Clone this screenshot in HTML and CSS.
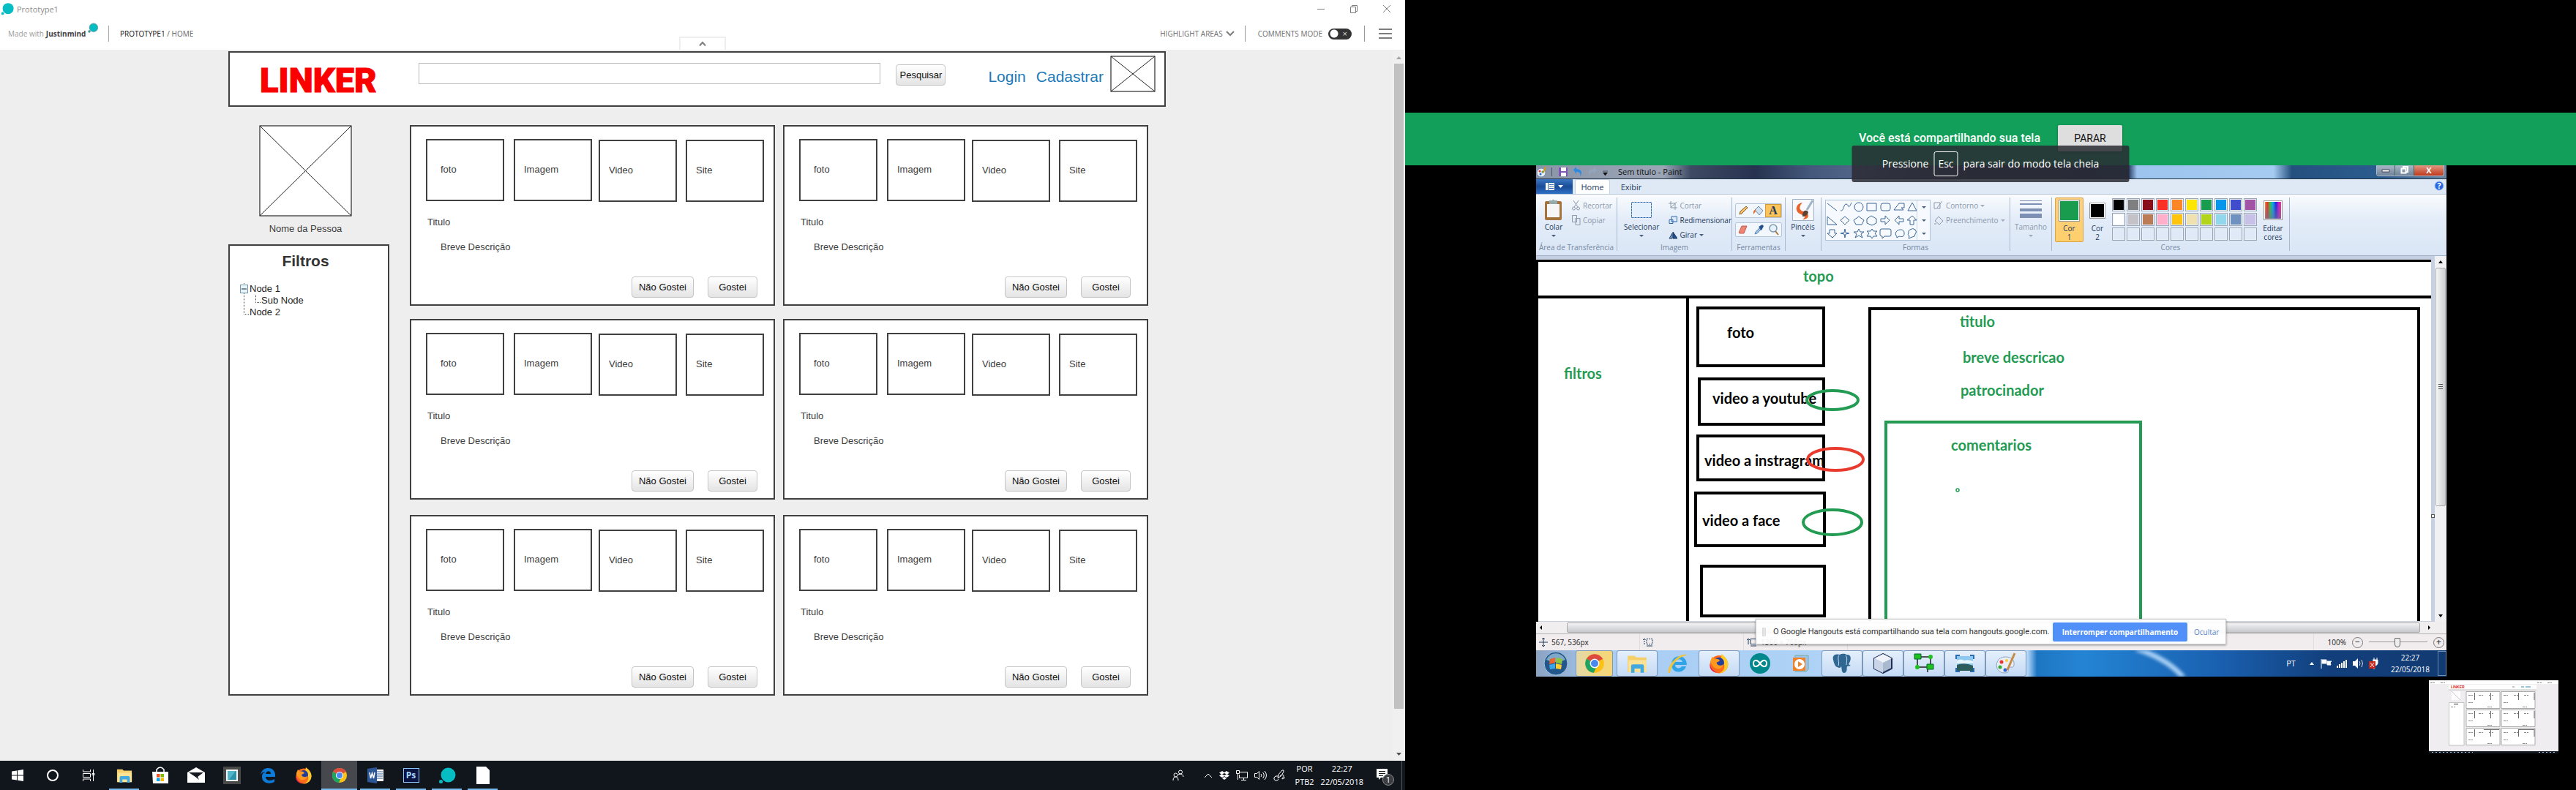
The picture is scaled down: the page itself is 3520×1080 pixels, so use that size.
FILE: index.html
```html
<!DOCTYPE html>
<html lang="pt-BR">
<head>
<meta charset="utf-8">
<title>Prototype1</title>
<link rel="stylesheet" href="styles.css">
</head>
<body>
<svg class="defs" aria-hidden="true">
  <defs>
    <symbol id="chrome" viewBox="0 0 24 24"><circle cx="12" cy="12" r="11" fill="#fbc116"/><path d="M12 12 2.500 6.500A11 11 0 0 1 21.500 6.500Z" fill="#dd4b3e"/><path d="M2.500 6.500A11 11 0 0 0 11 23L15 14Z" fill="#1da362"/><path d="M12 7h9.800L21.500 6.500 12 4Z" fill="#dd4b3e"/><circle cx="12" cy="12" r="5.500" fill="#fff"/><circle cx="12" cy="12" r="4.300" fill="#4a87ee"/></symbol>
    <symbol id="firefox" viewBox="0 0 24 24"><circle cx="12" cy="13" r="10.500" fill="#ff6a1c"/><path d="M15 1c4 3 8 7 7.500 13A10.500 10.500 0 0 1 12 23.500c5-2 7-6 6-10-1-4-5-6-3-12.500Z" fill="#ffc928"/><circle cx="12" cy="11" r="6" fill="#233f9b"/><path d="M2 9 4 4l3 3c3-1 5 0 6 2l-4 2c1 4 5 4 8 2-1 6-9 7-12 2C3 13 2 11 2 9Z" fill="#ff9a1f"/><path d="M1.500 12c1 6 4 9 9 11C4 23 0 18 1.500 12Z" fill="#e22a4c"/></symbol>
    <symbol id="blob" viewBox="0 0 24 24"><circle cx="13.500" cy="11.500" r="10" fill="#07bdc4"/><circle cx="3.500" cy="20.500" r="2.500" fill="#07bdc4"/></symbol>
    <symbol id="folder" viewBox="0 0 24 24"><path d="M1 3h8l2 2h12v17H1Z" fill="#f5cf6a"/><path d="M2 8h21v14H2Z" fill="#fbe296"/><path d="M5 23v-8q0-2 2-2h11q2 0 2 2v8h-4v-5H9v5Z" fill="#41a9e0"/></symbol>
  </defs>
</svg>
<div class="desktop">

<section class="screen-left">
  <div class="app-title">
    <svg class="i16"><use href="#blob"/></svg><span>Prototype1</span>
    <div class="win-buttons">
      <button aria-label="Minimizar"><svg width="12" height="12"><path d="M1 6.500h10"/></svg></button>
      <button aria-label="Restaurar"><svg width="12" height="12"><path d="M1.500 3.500h7v8h-7ZM3.500 3.500v-2h7v8h-2"/></svg></button>
      <button aria-label="Fechar"><svg width="12" height="12"><path d="M1 1l10 10M11 1 1 11"/></svg></button>
    </div>
  </div>
  <header class="app-bar">
    <a class="made" href="#">Made with <b>Justinmind</b><svg class="i14"><use href="#blob"/></svg></a>
    <nav class="crumbs"><a href="#">PROTOTYPE1</a> / HOME</nav>
    <button class="collapse" aria-label="Recolher"><svg width="12" height="8"><path d="M2 6.500 6 2l4 4.500"/></svg></button>
    <div class="app-tools">
      <button class="highlight">HIGHLIGHT AREAS <svg width="12" height="8"><path d="M1 1l5 5 5-5"/></svg></button>
      <label class="comments">COMMENTS MODE <input type="checkbox" class="toggle"></label>
      <button class="burger" aria-label="Menu"><svg width="18" height="14"><path d="M0 1h18M0 7h18M0 13h18"/></svg></button>
    </div>
  </header>
  <div class="viewport">
    <div class="proto">
      <div class="page">
        <header class="top">
          <h1 class="logo">LINKER</h1>
          <input class="search" type="search" aria-label="Pesquisar">
          <button class="btn find">Pesquisar</button>
          <nav class="links"><a href="#">Login</a><a href="#">Cadastrar</a></nav>
          <svg class="ph ph-small" viewBox="0 0 62 50"><rect x="1" y="1" width="60" height="48"/><path d="M1 1 61 49M61 1 1 49"/></svg>
        </header>
        <div class="columns">
          <aside class="side">
            <svg class="ph ph-big" viewBox="0 0 127 125"><rect x="1" y="1" width="125" height="123"/><path d="M1 1 126 124M126 1 1 124"/></svg>
            <p class="name">Nome da Pessoa</p>
            <div class="filters">
              <h2>Filtros</h2>
              <ul class="tree">
                <li><svg width="13" height="16"><path class="dots" d="M5.500 0v16"/><rect x="0.500" y="2.500" width="10" height="11"/><path class="minus" d="M2 8h7"/></svg>Node 1</li>
                <li><svg width="29" height="16"><path class="dots" d="M5.500 0v16M21.500 0v10.500h7"/></svg>Sub Node</li>
                <li><svg width="13" height="16"><path class="dots" d="M5.500 0v10.500h7"/></svg>Node 2</li>
              </ul>
            </div>
          </aside>
          <main class="cards">
            <article class="card"><div class="media"><div>foto</div><div>Imagem</div><div>Video</div><div>Site</div></div><h3>Titulo</h3><p>Breve Descrição</p><div class="acts"><button class="btn">Não Gostei</button><button class="btn">Gostei</button></div></article>
            <article class="card"><div class="media"><div>foto</div><div>Imagem</div><div>Video</div><div>Site</div></div><h3>Titulo</h3><p>Breve Descrição</p><div class="acts"><button class="btn">Não Gostei</button><button class="btn">Gostei</button></div></article>
            <article class="card"><div class="media"><div>foto</div><div>Imagem</div><div>Video</div><div>Site</div></div><h3>Titulo</h3><p>Breve Descrição</p><div class="acts"><button class="btn">Não Gostei</button><button class="btn">Gostei</button></div></article>
            <article class="card"><div class="media"><div>foto</div><div>Imagem</div><div>Video</div><div>Site</div></div><h3>Titulo</h3><p>Breve Descrição</p><div class="acts"><button class="btn">Não Gostei</button><button class="btn">Gostei</button></div></article>
            <article class="card"><div class="media"><div>foto</div><div>Imagem</div><div>Video</div><div>Site</div></div><h3>Titulo</h3><p>Breve Descrição</p><div class="acts"><button class="btn">Não Gostei</button><button class="btn">Gostei</button></div></article>
            <article class="card"><div class="media"><div>foto</div><div>Imagem</div><div>Video</div><div>Site</div></div><h3>Titulo</h3><p>Breve Descrição</p><div class="acts"><button class="btn">Não Gostei</button><button class="btn">Gostei</button></div></article>
          </main>
        </div>
      </div>
    </div>
    <div class="scroll">
      <svg width="17" height="19"><path d="M5 13h7L8.500 9Z" fill="#a3a3a3"/></svg>
      <div class="thumb"></div>
      <svg width="17" height="17"><path d="M5 6h7l-3.500 4Z" fill="#505050"/></svg>
    </div>
  </div>
  <footer class="taskbar">
    <button aria-label="Iniciar"><svg class="i18" viewBox="0 0 18 18"><path fill="#fff" d="M1 3.500 8 2.500v6H1ZM9 2.300 17 1v7.500H9ZM1 9.500h7v6L1 14.500ZM9 9.500h8V17l-8-1.300Z"/></svg></button>
    <button aria-label="Cortana"><svg class="i18" viewBox="0 0 18 18"><circle cx="9" cy="9" r="7" fill="none" stroke="#fff" stroke-width="2"/></svg></button>
    <button aria-label="Tarefas"><svg class="i18" viewBox="0 0 18 18"><path fill="none" stroke="#fff" d="M1.500 1v3h10V1M1.500 17v-3h10v3M1.500 6.500h10v5h-10ZM15.500 1v16M14 6.500h3v2h-3Z"/></svg></button>
    <button class="open" aria-label="Explorador"><svg class="i22"><use href="#folder"/></svg></button>
    <button aria-label="Loja"><svg class="i24" viewBox="0 0 24 24"><path d="M1 7h22v16H2Z" fill="#fff"/><path d="M7 7V4q5-6 10 0v3" fill="none" stroke="#fff" stroke-width="1.500"/><path d="M7 10h4.500v4.500H7Z" fill="#f25022"/><path d="M12.500 10H17v4.500h-4.500Z" fill="#7fba00"/><path d="M7 15.500h4.500V20H7Z" fill="#00a4ef"/><path d="M12.500 15.500H17V20h-4.500Z" fill="#ffb900"/></svg></button>
    <button aria-label="Email"><svg class="i24" viewBox="0 0 24 24"><path d="M0 8 12 1l12 7v14H0Z" fill="#fff"/><path d="M2 8h20l-8 6 2 4-5-4Z" fill="#14181f"/></svg></button>
    <button aria-label="Notas"><svg class="i24" viewBox="0 0 24 24"><path d="M0 0h24v24H0Z" fill="#494949"/><path d="M4 4h16v16H4Z" fill="#f5f5f5"/><path d="M6 6h12v12H6Z" fill="#52b5c9"/><path d="m8 18 9-12h1v12Z" fill="#2c91aa"/></svg></button>
    <button aria-label="Edge"><svg class="i22" viewBox="0 0 22 22"><path d="M1 10C3 3 7 1 11.500 1 18 1 21 6 21 10v3H8c0 6 8 6 12 3v4c-8 4-17 1-17-7 0-4 2-6 5-7-4 0-6 2-7 4Zm7-1h7c0-5-6-5-7 0Z" fill="#0e7bd8"/></svg></button>
    <button aria-label="Firefox"><svg class="i24"><use href="#firefox"/></svg></button>
    <button class="open active" aria-label="Chrome"><svg class="i22"><use href="#chrome"/></svg></button>
    <button class="open" aria-label="Word"><svg class="i22" viewBox="0 0 22 22"><path d="M12 3h10v16H12Z" fill="#fff"/><path d="M13 6h8M13 9h8M13 12h8M13 15h8" stroke="#2b5797"/><path d="M0 2 13 0v22L0 20Z" fill="#2b5797"/><path d="m3 7 1.500 8L6.500 8l2 7L10 7" fill="none" stroke="#fff" stroke-width="1.500"/></svg></button>
    <button class="open" aria-label="Photoshop"><span class="ps">Ps</span></button>
    <button class="open" aria-label="Justinmind"><svg class="i24"><use href="#blob"/></svg></button>
    <button class="open" aria-label="Documento"><svg class="i24" viewBox="0 0 24 24"><path d="M3 0h13l5 5v19H3Z" fill="#fff"/></svg></button>
    <div class="tray">
      <svg width="16" height="16" viewBox="0 0 16 16"><circle cx="11" cy="3.500" r="2.500"/><circle cx="4.500" cy="7.500" r="2.500"/><path d="M1 15q0-5 3.500-5T8 15M8 7q3-2 5.500 0 1.500 1 1.500 3"/></svg>
      <svg class="up" width="12" height="8" viewBox="0 0 12 8"><path d="m1 7 5-5 5 5"/></svg>
      <svg width="14" height="14" viewBox="0 0 14 14"><path class="fill" d="m0 3.500 4-2.500 3 2 3-2 4 2.500-3 2 3 2L10 10 7 8l-3 2-4-2.500 3-2ZM4 11l3-2 3 2-3 2Z"/><path d="m4 5.500 3-1.500 3 1.500L7 7Z" style="fill:#11151c;stroke:none"/></svg>
      <svg width="16" height="14" viewBox="0 0 16 14"><path d="M4 2.500h11.500v8H4.500V6M7 13.500h7M10.500 10v3M.5.500h4v4h-4ZM2.500 5v8"/></svg>
      <svg width="17" height="14" viewBox="0 0 17 14"><path d="M.5 4.500h3l3-3v11l-3-3h-3ZM9 5q2 2 0 4M11.500 3q3.500 4 0 8M14 1q5 6 0 12"/></svg>
      <svg width="17" height="16" viewBox="0 0 17 16"><path d="M7 9Q2 8 1 11t2 4 4-2M6 12q0-6 6-11 3-1 2 2-2 6-8 9ZM9 9q4-3 5-1t-2 4q-1 2 4-1"/></svg>
      <p class="lang">POR<br>PTB2</p>
      <p class="clock">22:27<br>22/05/2018</p>
      <svg class="note" width="26" height="26" viewBox="0 0 26 26"><path class="fill" d="M1 2h15v12H7l-3 3v-3H1Z"/><path d="M4 5.500h9M4 8.500h9M4 11.500h6" style="stroke:#11151c"/><circle cx="17" cy="17" r="7.500" style="fill:#3a3d42;stroke:#8a8a8a"/><text x="17" y="21">1</text></svg>
    </div>
  </footer>
</section>

<section class="screen-right">
  <div class="share-bar">
    <span>Você está compartilhando sua tela</span><button>PARAR</button>
    <div class="toast">Pressione <kbd>Esc</kbd> para sair do modo tela cheia</div>
  </div>
  <div class="remote">
    <div class="p-title">
      <svg width="104" height="18" viewBox="0 0 104 18"><circle cx="7" cy="10" r="6" fill="#e8eef6" stroke="#6d8cb2"/><circle cx="5" cy="8" r="1.500" fill="#d33"/><circle cx="9" cy="9" r="1.500" fill="#3a6"/><circle cx="6" cy="12" r="1.500" fill="#36c"/><path d="m10 10 3-8" stroke="#d90" stroke-width="2"/><path d="M21.500 3v12" stroke="#456"/><path d="M31 3h12v12H31Z" fill="#7c55b5"/><path d="M34 3h7v5h-7ZM34 10h7v5h-7Z" fill="#fff"/><path d="m51 6 4-4v3c7 0 9 5 5 10 1-4 0-6-5-6v3Z" fill="#2f8be0"/><path d="m83 6-4-4v3c-7 0-9 5-5 10-1-4 0-6 5-6v3Z" fill="#93a5bd"/><path d="M91 8h7M91.500 10h6l-3 4Z" fill="#111" stroke="#111" stroke-width=".5"/></svg>
      <span>Sem título - Paint</span>
      <div class="aero"><button aria-label="Minimizar"><svg width="12" height="8"><path d="M1 3h10v3H1Z" fill="#fff" stroke="#445"/></svg></button><button aria-label="Restaurar"><svg width="12" height="12"><path d="M1.500 3.500h6v6h-6ZM4 3V1h6v7H8" fill="none" stroke="#fff" stroke-width="2"/></svg></button><button class="close" aria-label="Fechar">X</button></div>
    </div>
    <div class="p-tabs">
      <button class="file" aria-label="Arquivo"><svg width="26" height="12"><path d="M1 1h12v10H1Z" fill="#fff"/><path d="M4.500 1v10M6 3.500h6M6 6h6M6 8.500h6" stroke="#2a62ae"/><path d="M18 4h7l-3.500 4Z" fill="#fff"/></svg></button>
      <button class="tab on">Home</button><button class="tab">Exibir</button>
      <svg class="help" width="14" height="14"><circle cx="7" cy="7" r="6" fill="#2a6ae0" stroke="#9fc0f2"/><text x="7" y="11">?</text></svg>
    </div>
    <div class="ribbon">
      <div class="grp g-clip"><div class="body">
        <button class="big"><svg width="26" height="30" viewBox="0 0 26 30"><rect x="1" y="3" width="23" height="26" rx="2" fill="#a5733c"/><path d="M4 7h17v18H4Z" fill="#f6f6f6"/><path d="M7 2h4q1.500-3 3 0h4v5H7Z" fill="#9aa"/></svg>Colar<i></i></button>
        <div class="stack dim"><button><svg width="12" height="14" viewBox="0 0 12 14"><path d="m2 0 6 9M9 0 3 9"/><circle cx="2.500" cy="11" r="2"/><circle cx="8.500" cy="11" r="2"/></svg>Recortar</button><button><svg width="12" height="14" viewBox="0 0 12 14"><path d="M.5.500h6v9h-6ZM5 4.500h6v9H5Z"/></svg>Copiar</button></div>
      </div><h4>Área de Transferência</h4></div>
      <div class="grp g-img"><div class="body">
        <button class="big"><svg width="30" height="30"><rect x="1.500" y="4.500" width="27" height="21" fill="#e4f0fc" stroke="#2f68a8" stroke-dasharray="3 1"/></svg>Selecionar<i></i></button>
        <div class="stack"><button class="dim"><svg width="12" height="12" viewBox="0 0 12 12"><path d="M3 0v9h9M0 3h9v9M3 9l8-8"/></svg>Cortar</button><button><svg width="12" height="12" viewBox="0 0 12 12"><path d="M4 1h7.500v7H4ZM1 5.500h5v5H1Z" fill="#dceafb" stroke="#2f68a8"/></svg>Redimensionar</button><button><svg width="12" height="12" viewBox="0 0 12 12"><path d="m6 2 6 9H6Z" fill="#1d4f93"/><path d="M5 4v7H1Z" fill="#8db8e6"/></svg>Girar<i></i></button></div>
      </div><h4>Imagem</h4></div>
      <div class="grp g-tools"><div class="body">
        <div class="tools"><button aria-label="Lápis"><svg width="16" height="16"><path d="m3 13 1-4 8-7 2 2-8 8Z" fill="#f5c363" stroke="#875b2a"/></svg></button><button aria-label="Preencher"><svg width="16" height="16"><path d="m4 7 5-5 6 6-5 6Z" fill="#cfe0ee" stroke="#6d8ca8"/><path d="M5 6q-4 2-3 7l3-4Z" fill="#e36b2c"/></svg></button><button class="sel" aria-label="Texto">A</button></div>
        <div class="tools"><button aria-label="Borracha"><svg width="16" height="16"><path d="m2 12 4-9h7l-4 10H3Z" fill="#ee8474" stroke="#c35f52"/></svg></button><button aria-label="Selecionar cor"><svg width="16" height="16"><path d="m3 14 1-3 5-5 2 2-5 5Z" fill="#9ec3e6" stroke="#5685b5"/><path d="m8 4 5-3 2 2-3 6Z" fill="#20508e"/></svg></button><button aria-label="Lupa"><svg width="16" height="16"><circle cx="7" cy="6" r="5" fill="#e3f2fd" stroke="#8298ad" stroke-width="1.500"/><path d="m10 10 4 5" stroke="#a9763c" stroke-width="2"/></svg></button></div>
      </div><h4>Ferramentas</h4></div>
      <div class="grp g-brush"><div class="body">
        <button class="big"><svg width="30" height="30"><path d="M.5.500h29v29H.5Z" fill="#f7f9fc" stroke="#9fb0c6"/><path d="M14 5C5 6 3 16 10 20s10 4 4 8C25 28 24 18 15 17 8 15 10 9 14 5Z" fill="#e8622a"/><path d="M14 24c0-6 2-9 6-8s1 8-6 8Z" fill="#5b4334"/><path d="m20 15 8-13" stroke="#9db3c8" stroke-width="3"/></svg>Pincéis<i></i></button>
      </div></div>
      <div class="grp g-shapes"><div class="body">
        <div class="shapes"><svg width="124" height="53" viewBox="0 0 124 53"><path d="m2 4 13 10M20 14c5 1 4-10 8-9s2 9 7-2M56 4h13v10H56ZM93 13h13l-3-3h4V4h-7ZM112 14l6-11 6 11ZM2 22v11h13ZM20 27l6-5 6 5-6 6ZM38 27l7-5 7 5-3 6h-8ZM56 25l6-4 7 4v6l-6 3-7-3ZM75 25h6v-4l6 6-6 6v-4h-6ZM106 25h-6v-4l-6 6 6 6v-4h6ZM115 33v-6h-4l7-6 6 6h-4v6ZM5 40h7v5h3l-6 6-7-6h3ZM20 45l5-1 1-5 1 5 5 1-5 1-1 5-1-5ZM45 39l2 4h5l-4 3 2 5-5-3-5 3 2-5-4-3h5ZM63 39l2 3h5l-3 3 3 4h-5l-2 3-2-3h-5l3-4-3-3h5ZM76 39h11q2 0 2 2v6q0 2-2 2h-7l-3 3v-3q-3 0-3-2v-6q0-2 2-2Z"/><circle cx="45" cy="9" r="6"/><rect x="75" y="4" width="13" height="10" rx="3"/><path d="M97 51q0-2-1-3c-4-7 10-12 11-4s-7 5-7 5ZM115 40q4-3 7 0 3 3 0 6 0 4-4 4l-5 2 1-3q-3-2-1-5-1-3 2-4Z"/></svg><div class="more"><i></i><i></i><i></i></div></div>
        <div class="stack dim"><button><svg width="14" height="14"><path d="M1 3h8v8H1ZM5 10l7-9"/></svg>Contorno<i></i></button><button><svg width="14" height="14"><path d="m2 8 5-6 6 6-5 5ZM1 12h3"/></svg>Preenchimento<i></i></button></div>
      </div><h4>Formas</h4></div>
      <div class="grp g-size"><div class="body">
        <button class="big dim"><svg width="30" height="30"><path d="M0 2h30v1H0ZM0 6h30v2H0ZM0 13h30v4H0ZM0 20h30v6H0Z" fill="#7d8fb2"/></svg>Tamanho<i></i></button>
      </div></div>
      <div class="grp g-colors"><div class="body">
        <button class="col one"><b></b><span>Cor<br>1</span></button>
        <button class="col"><b></b><span>Cor<br>2</span></button>
        <div class="palette"><s style="background:#000"></s><s style="background:#7f7f7f"></s><s style="background:#880f1a"></s><s style="background:#fa3027"></s><s style="background:#ff8626"></s><s style="background:#ffe600"></s><s style="background:#199c4e"></s><s style="background:#0296ec"></s><s style="background:#3f4dcc"></s><s style="background:#a253a6"></s><s style="background:#fff"></s><s style="background:#c4c2c6"></s><s style="background:#bb7b56"></s><s style="background:#ffafc9"></s><s style="background:#ffc40e"></s><s style="background:#efe2b0"></s><s style="background:#b2d41c"></s><s style="background:#93d7ec"></s><s style="background:#6f91c0"></s><s style="background:#c9c0e8"></s><s></s><s></s><s></s><s></s><s></s><s></s><s></s><s></s><s></s><s></s></div>
        <button class="col edit"><b></b><span>Editar<br>cores</span></button>
      </div><h4>Cores</h4></div>
    </div>
    <div class="work">
      <div class="paper">
        <svg class="sketch" viewBox="0 0 1220 494">
          <path d="M0 0h1220v3H0ZM0 49h1220v4H0ZM202 53h4v441h-4Z"/>
          <g class="ink"><rect x="218" y="66" width="172" height="79"/><rect x="220" y="163" width="170" height="62"/><rect x="218" y="241" width="172" height="60"/><rect x="215" y="319" width="176" height="72"/><rect x="223" y="419" width="168" height="68"/><rect x="453" y="67" width="750" height="440"/><rect class="g" x="475" y="222" width="348" height="300"/></g>
          <g class="tx"><text x="258" y="107">foto</text><text x="238" y="197">video a youtube</text><text x="227" y="282">video a instragram</text><text x="224" y="364">video a face</text></g>
          <g class="tx gt"><text x="362" y="30">topo</text><text x="35" y="163">filtros</text><text x="576" y="92">titulo</text><text x="580" y="141">breve descricao</text><text x="577" y="186">patrocinador</text><text x="564" y="261">comentarios</text></g>
          <g class="ink"><ellipse class="g" cx="402" cy="192" rx="35" ry="13"/><ellipse class="r" cx="406" cy="273" rx="38" ry="15"/><ellipse class="g" cx="402" cy="359" rx="40" ry="17"/></g>
          <circle cx="573" cy="315" r="2" fill="#fff" stroke="#239b52" stroke-width="1.500"/>
        </svg>
        <i class="handle"></i>
      </div>
      <div class="vs"><svg width="16" height="16"><path d="M5 10h6L8 6Z"/></svg><div><svg width="8" height="10"><path d="M1 1.500h6M1 4.500h6M1 7.500h6" stroke="#555"/></svg></div><svg width="16" height="16"><path d="M5 6h6l-3 4Z"/></svg></div>
      <div class="hs"><svg width="42" height="14"><path d="M8 4v6L5 7Z"/></svg><div></div><svg width="20" height="14"><path d="M11 4v6l3-3Z"/></svg></div>
    </div>
    <div class="status">
      <span class="s1"><svg width="12" height="12"><path d="M6 0v12M0 6h12M4 2l2-2 2 2M4 10l2 2 2-2"/></svg>567, 536px</span>
      <span class="s2"><svg width="14" height="12"><path d="M2 1v8M0 3l2-2 2 2M5 1.500h8v7H5Z" stroke-dasharray="2 1"/><path d="M5 11h8"/></svg></span>
      <span class="s3"><svg width="14" height="12"><path d="M2 1v8M0 3l2-2 2 2M5 1.500h8v7H5ZM5 11h8"/></svg>1366 × 768px</span>
      <span class="s4">100% <button aria-label="Diminuir">−</button><input type="range" min="0" max="100" value="49" aria-label="Zoom"><button aria-label="Aumentar">+</button></span>
    </div>
    <div class="hang"><svg width="6" height="12"><path d="M1 0v12M4 0v12" stroke="#bbb"/></svg><span>O Google Hangouts está compartilhando sua tela com hangouts.google.com.</span><button>Interromper compartilhamento</button><a href="#">Ocultar</a></div>
    <div class="seven">
      <button class="orb" aria-label="Iniciar"><svg width="34" height="34" viewBox="0 0 34 34"><circle cx="17" cy="17" r="16" fill="#23568a" stroke="#9fc3de"/><path d="M4 12a14 14 0 0 1 26 0q-13 6-26 0Z" fill="#7fa8c8"/><path d="m9 11 7-2v7l-8 2Z" fill="#f06529"/><path d="m18 9 8 2-1 7-8-2Z" fill="#8cc63e"/><path d="m8 19 8-2v7l-7 1Z" fill="#3aa5e8"/><path d="m17 17 8 2-1 6-7-1Z" fill="#ffcb2f"/></svg></button>
      <button class="tile gold" aria-label="Chrome"><svg width="28" height="28"><use href="#chrome"/></svg></button>
      <button class="tile" aria-label="Explorador"><svg width="28" height="28"><use href="#folder"/></svg></button>
      <button aria-label="Internet Explorer"><svg width="30" height="30" viewBox="0 0 30 30"><path d="M26 19h-6c-2 4-9 3-9-2h16c0-16-21-15-21-1s17 13 20 3ZM11 13c1-5 9-5 10 0Z" fill="#2fa4e6"/><path d="M2 28C-2 19 19-3 28 4 21 3 6 13 4 28Z" fill="#f3c43a"/></svg></button>
      <button class="tile" aria-label="Firefox"><svg width="28" height="28"><use href="#firefox"/></svg></button>
      <button aria-label="Arduino"><svg width="30" height="30"><circle cx="15" cy="15" r="14" fill="#00888d"/><path d="M15 15c-4-6-9-5-9 0s5 6 9 0 9-5 9 0-5 6-9 0Z" fill="none" stroke="#fff" stroke-width="2"/></svg></button>
      <button aria-label="Media Player"><svg width="28" height="28"><path d="M6 3h18v19l-3 3H6Z" fill="#9cc4e4" stroke="#7aa"/><path d="M3 6h17v18H3Z" fill="#f0832a"/><circle cx="12" cy="15" r="7" fill="#fff"/><path d="m10 11 6 4-6 4Z" fill="#f0832a"/></svg></button>
      <button class="tile" aria-label="PostgreSQL"><svg width="28" height="28"><path d="M2 9C0 1 8 1 11 2c4-2 8-1 9 0 6-1 8 5 3 13l3 2-5 1c-1 3 1 8-4 9-4 0-3-6-4-9-1 2-3 3-5 1-3 0-5-5-6-10Z" fill="#2f6792"/><path d="M10 3c-3 4 1 9-1 14M19 3c3 4 1 9 1 13" fill="none" stroke="#cfe2f4"/></svg></button>
      <button class="tile" aria-label="NetBeans"><svg width="28" height="28"><path d="m14 1 12 6v14l-12 6L2 21V7Z" fill="#a9b9cf" stroke="#1f2e55" stroke-width="2"/><path d="M14 13 26 7 14 1 2 7Z" fill="#eef3fa"/><path d="M14 13v14L2 21V7Z" fill="#c9d5e6"/></svg></button>
      <button class="tile" aria-label="Diagrama"><svg width="30" height="28"><path d="M6 5h18v14H6ZM20 19v7" fill="none" stroke="#222" stroke-width="1.500"/><path d="M2 1h9v7H2ZM19 15h9v7h-9Z" fill="#1fc11f" stroke="#063"/><circle cx="24" cy="5" r="3" fill="#1fc11f"/><circle cx="6" cy="19" r="3" fill="#1fc11f"/></svg></button>
      <button class="tile" aria-label="Fotos"><svg width="28" height="28"><path d="M3 4h22v20H3Z" fill="#8cc8f0"/><path d="M3 10q6-3 10 0 6-2 12 1v3H3Z" fill="#e8f4fc"/><path d="M3 16q10-4 22 1v7H3Z" fill="#2c5c5b"/><path d="M2 8V3h5M21 3h5v5M26 20v5h-5M7 25H2v-5" fill="none" stroke="#2b6cb0" stroke-width="2"/></svg></button>
      <button class="tile" aria-label="Paint"><svg width="30" height="30"><path d="M14 6c9 0 13 5 12 11s-5 1-7 4 2 7-6 7C-2 28-1 6 14 6Z" fill="#e9eef5" stroke="#8ba3c0"/><circle cx="9" cy="13" r="2.500" fill="#e33"/><circle cx="7" cy="20" r="2.500" fill="#3a3"/><circle cx="14" cy="24" r="2.500" fill="#36c"/><circle cx="16" cy="11" r="2" fill="#fc3"/><path d="M17 24 27 1" stroke="#c88b45" stroke-width="3"/></svg></button>
      <svg class="swoosh" viewBox="0 0 120 36"><path d="M20-2Q64 12 85 38" fill="none" stroke="#a8d0f5" stroke-width="7"/></svg>
      <div class="tray7">
        <span class="pt">PT</span>
        <svg width="94" height="16" viewBox="0 0 94 16"><path d="m0 10 3-4 3 4Z" fill="#fff"/><path d="M16 2v13M17 3h6v5h-6ZM24 5h6l-2 2 1 3h-5Z" fill="#fff" stroke="#fff"/><path d="M37 11h2v3h-2ZM40 9h2v5h-2ZM43 7h2v7h-2ZM46 5h2v9h-2ZM49 3h2v11h-2ZM59 5h3l4-4v14l-4-4h-3Z" fill="#fff"/><path d="M68 5q2 3 0 6M71 3q3 5 0 10" fill="none" stroke="#ddd"/><path d="M86 3h7v5q-1 3-4 3v4h-2V3M88 0v3M92 0v3" fill="#fff" stroke="#fff"/><path d="M81 5h9v10h-9Z" fill="#c7281c"/><path d="m83 7 5 6M88 7l-5 6" stroke="#fff"/></svg>
        <p>22:27<br>22/05/2018</p><i></i>
      </div>
    </div>
  </div>
  <svg class="preview" viewBox="0 0 177 100">
    <path d="M0 0h177v100H0Z" fill="#efedef"/><path d="M0 0h177v5H0ZM27 6h120v7H27ZM31 15h12v12H31ZM27 30h21v59H27Z" fill="#fff"/>
    <path d="M31 15 43 27M27.500 89V30.500H48V89ZM27 13h120" fill="none" stroke="#aaa" stroke-width=".7"/>
    <g fill="#fff" stroke="#aaa" stroke-width="1"><path d="M51 15.500h46v23H51ZM99 15.500h46v23H99ZM51 40.500h46v23H51ZM99 40.500h46v23H99ZM51 65.500h46v23H51ZM99 65.500h46v23H99Z"/></g>
    <path d="M62.500 17v10M84.500 17v10M122.500 17v10M144 17v10M62.500 42v10M84.500 42v10M122.500 42v10M144 42v10M62.500 67v10M84.500 67v10M122.500 67v10M75 67.500h21M123 67.500h21M144 67v10" stroke="#666"/>
    <path d="M54 20.500h40M102 20.500h40M54 45.500h40M102 45.500h40M54 71.500h40M102 71.500h40M80 36.500h14M128 36.500h14M80 61.500h14M128 61.500h14M80 86.500h14M128 86.500h14M54 30.500h8M102 30.500h8M54 55.500h8M102 55.500h8M54 81.500h10M102 81.500h10M30 36.500h8M2 3.500h20M148 3.500h25M114 9h4" stroke="#888" stroke-dasharray="3 1 2 8"/>
    <path d="M34 32.500h6" stroke="#333"/><path d="M126 9h4M132 9h7" stroke="#3a86b7"/><text x="30" y="11">LINKER</text>
    <path d="M0 97h177v3H0Z" fill="#11151c"/><path d="M4 98.500h56M150 98.500h22" stroke="#9bd" stroke-dasharray="2 3"/>
  </svg>
</section>
</div>
</body>
</html>
```
FILE: styles.css
```css
* { box-sizing: border-box; }
body { margin: 0; background: #000; font-family: "Open Sans", "Noto Sans", sans-serif; }
h1, h2, h3, h4, p, ul { margin: 0; padding: 0; font-weight: normal; }
button { margin: 0; padding: 0; border: 0; background: none; font: inherit; color: inherit; }
a { color: inherit; text-decoration: none; }
svg { display: block; flex: none; }
.defs { position: absolute; width: 0; height: 0; }
.i14 { width: 14px; height: 14px; }
.i16 { width: 18px; height: 18px; }
.i18 { width: 18px; height: 18px; }
.i22 { width: 22px; height: 22px; }
.i24 { width: 24px; height: 24px; }

.desktop { display: grid; grid-template-columns: 6fr 5fr; min-height: 100vh; }
.screen-left { display: flex; flex-direction: column; background: #fff; min-width: 0; }

/* prototype viewer */
.app-title { display: flex; align-items: center; height: 24px; padding: 0 19px 0 1px; gap: 4px; font-size: 11px; color: #8b8b8b; }
.win-buttons { display: flex; gap: 33px; margin-left: auto; }
.win-buttons svg, .app-bar svg { fill: none; stroke: #7d7d7d; }
.app-bar { display: grid; grid-template-columns: 1fr auto 1fr; align-items: center; grid-template-rows: 44px; font-size: 10px; color: #6e6e6e; }
.made { display: flex; align-items: center; gap: 3px; grid-column: 1; grid-row: 1; width: 138px; height: 22px; margin-left: 11px; border-right: 1px solid #aaa; color: #9a9a9a; white-space: nowrap; }
.made b { color: #3f3f46; }
.made .i14 { margin-bottom: 16px; }
.crumbs { grid-column: 1; grid-row: 1; margin-left: 164px; color: #666; }
.crumbs a { color: #111; }
.collapse { grid-column: 2; width: 64px; height: 18px; align-self: end; display: grid; place-items: center; border: 2px solid #eee; border-bottom: 0; }
.app-bar .collapse svg, .app-bar .highlight svg { stroke-width: 2px; }
.app-tools { grid-column: 3; display: flex; justify-content: flex-end; align-items: center; height: 22px; padding-right: 18px; }
.highlight, .comments { display: flex; align-items: center; height: 22px; border-right: 1px solid #999; }
.highlight { gap: 4px; padding-right: 14px; margin-right: 17px; }
.comments { gap: 8px; padding-right: 17px; margin-right: 19px; }
.burger path { stroke-width: 2px; }
.toggle { appearance: none; width: 32px; height: 15px; margin: 0; border-radius: 8px; background: radial-gradient(circle at 8px 7px, #fff 5px, transparent 6px), #333; display: flex; align-items: center; justify-content: flex-end; padding-right: 6px; }
.toggle::before { content: "×"; color: #ddd; font-size: 11px; line-height: 15px; }

.viewport { flex: 1; display: grid; grid-template-columns: 1fr 17px; background: #eee; }
.proto { padding: 2px 0 0 2px; font-family: "Liberation Sans", Arial, sans-serif; font-size: 13px; line-height: 16px; color: #3c3c3c; }
.page { max-width: 1281px; margin: 0 auto; }
.top { display: flex; align-items: flex-start; height: 76px; border: 2px solid #404040; background: #fff; }
.logo { flex: none; width: 217px; margin-left: 41px; padding-top: 8px; font: 900 47px/60px Roboto, sans-serif; color: #fb0000; -webkit-text-stroke: 1px #fb0000; }
.search { flex: 1; height: 29px; margin-top: 14px; padding: 0 6px; border: 1px solid #bbb; background: #fff; font: inherit; }
.btn { height: 29px; border: 1px solid #c4c4c4; border-radius: 4px; background: linear-gradient(#fff, #e4e4e4); color: #111; white-space: nowrap; }
.find { width: 68px; margin: 16px 58px 0 21px; }
.links { display: flex; gap: 14px; margin: 19px 9px 0 0; font-size: 21px; line-height: 28px; color: #1c79b8; }
.ph { fill: #fff; stroke: #222; }
.ph rect { stroke: #000; }
.ph-small { width: 62px; height: 50px; margin: 4px 12px 0 0; }
.columns { display: flex; gap: 28px; padding: 25px 24px 0 0; }
.side { flex: none; width: 220px; display: flex; flex-direction: column; align-items: center; }
.ph-big { width: 127px; height: 125px; margin-right: 9px; }
.name { padding: 9px 9px 13px 0; }
.filters { flex: 1; width: 100%; border: 2px solid #404040; background: #fff; }
.filters h2 { padding: 9px 9px 0 0; font-size: 21px; line-height: 24px; font-weight: bold; text-align: center; color: #333; }
.tree { list-style: none; margin: 18px 0 0 14px; color: #222; }
.tree li { display: flex; height: 16px; }
.tree svg { fill: #e8f4fb; stroke: #7698ab; }
.tree .dots { fill: none; stroke: #444; stroke-dasharray: 1 1; }
.tree .minus { stroke: #123; }
.cards { flex: 1; min-width: 0; display: grid; grid-template-columns: minmax(0, 1fr) minmax(0, 1fr); gap: 18px 11px; }
.card { height: 247px; padding: 17px 14px 0 20px; border: 2px solid #404040; background: #fff; }
.card:nth-child(n+5) { margin-top: 3px; }
.media { display: flex; width: 462px; }
.media div { flex: none; width: 107px; height: 85px; margin-right: 12px; padding: 32px 0 0 12px; border: 2px solid #404040; }
.media div:nth-child(1) { margin-right: 13px; padding-left: 18px; }
.media div:nth-child(2) { margin-right: 9px; }
.media div:nth-child(n+3) { margin-top: 1px; }
.media div:last-child { margin-right: 0; }
.card h3 { font-size: 13px; padding: 20px 0 0 2px; }
.card p { padding: 18px 0 0 20px; }
.acts { display: flex; justify-content: flex-end; gap: 19px; padding: 32px 8px 0 0; }
.acts .btn { width: 85px; }
.acts .btn + .btn { width: 68px; }
.scroll { display: flex; flex-direction: column; background: #f0f0f0; }
.scroll .thumb { flex: 1; margin: 0 2px 54px; background: #c1c1c1; }

.taskbar { display: flex; height: 40px; background: #11151c; color: #fff; }
.taskbar > button { width: 49px; display: grid; place-items: center; }
.taskbar > button:first-child { width: 47px; }
.taskbar > .open { border: solid transparent; border-width: 0 4px; background: linear-gradient(#76b9ed, #76b9ed) 0 100% / 100% 2px no-repeat padding-box; }
.taskbar > .active { border: 0; background: linear-gradient(#76b9ed, #76b9ed) 0 100% / 100% 2px no-repeat, #47484d; }
.ps { width: 22px; height: 20px; border: 1px solid #8fc8ff; background: #0a1544; color: #a5d5ff; font: bold 12px/18px "Open Sans", sans-serif; }
.tray { display: flex; align-items: center; margin-left: auto; padding-right: 9px; border-right: 1px solid #555; margin-right: 4px; gap: 9px; font-size: 11px; line-height: 18px; text-align: center; }
.tray svg { fill: none; stroke: #fff; }
.tray .up { margin-left: 18px; }
.tray .fill { fill: #fff; stroke: none; }
.tray .note { margin: 4px 0 0 8px; }
.tray .lang { margin-left: 4px; }
.tray text { fill: #fff; stroke: none; font-size: 11px; text-anchor: middle; }

/* second screen */
.screen-right { display: flex; flex-direction: column; padding: 154px 0 0; min-width: 0; }
.share-bar { position: relative; display: flex; align-items: flex-start; justify-content: center; height: 72px; gap: 24px; background: #129f59; color: #fff; font: 500 16px/36px Roboto, sans-serif; padding-top: 17px; }
.share-bar button { width: 88px; height: 36px; border-radius: 2px; background: #dedede; color: #111; font-size: 14px; font-weight: 400; box-shadow: 0 1px 3px rgba(0, 0, 0, .4); }
.toast { position: absolute; top: 45px; left: 50%; transform: translateX(-50%); z-index: 2; display: flex; align-items: center; justify-content: center; gap: 7px; width: 379px; height: 50px; border-radius: 3px; background: rgba(42, 42, 50, .85); color: #fff; font: 14px/20px "Open Sans", sans-serif; white-space: nowrap; }
.toast kbd { padding: 6px 5px; border: 1px solid #fff; border-radius: 3px; font: inherit; }
.remote { position: relative; margin: 0 177px 0 179px; font-size: 10px; color: #1e395b; }
.p-title { display: flex; height: 19px; border-bottom: 1px solid #234; color: #111; font-size: 11px; line-height: 18px; background: linear-gradient(90deg, #8a96a8 0, #9aa5b6 14%, #3e4a63 17%, #26324f 24%, #44587c 30%, #52688a 36%, #26324f 48%, #1d3157 65%, #9cc4ee 66%, #a6cbf1 81%, #24507f 83%, #2c5d90 93%, #6a88a6); }
.p-title > svg { margin-right: 8px; }
.aero { display: flex; width: 93px; height: 15px; margin: 0 3px 0 auto; border: 1px solid #aebccd; border-top: 0; border-radius: 0 0 4px 4px; overflow: hidden; }
.aero button { flex: 26; display: grid; place-items: center; background: linear-gradient(#a9b7c8, #71839a); border-right: 1px solid #465; }
.aero .close { flex: 43; border: 0; background: linear-gradient(#e09783, #c0391c); color: #fff; font-weight: bold; line-height: 14px; }
.p-tabs { display: flex; align-items: flex-end; height: 21px; background: #dfe9f6; font-size: 11px; border-bottom: 1px solid #b5c5da; }
.file { width: 50px; height: 20px; display: grid; place-items: center; background: linear-gradient(#3b77c4, #1a4b96 50%, #2e70c4); }
.tab { width: 48px; height: 20px; }
.tab.on { margin: 0 5px 0 3px; background: #fff; border: 1px solid #c5d3e4; border-bottom: 0; border-radius: 3px 3px 0 0; }
.help { margin: 0 3px 4px auto; }
.help text { fill: #fff; font-size: 11px; font-weight: bold; text-anchor: middle; }
.ribbon { display: flex; height: 84px; padding: 4px 0 6px; background: linear-gradient(#fafcfe, #e3ecf8 40%, #dae6f6); border-bottom: 1px solid #9fb0c8; line-height: 12px; }
.grp { display: flex; flex-direction: column; justify-content: space-between; border-right: 1px solid #a9b9cf; white-space: nowrap; }
.grp h4 { font-size: 10px; line-height: 10px; text-align: center; color: #75879f; }
.body { display: flex; }
.g-clip { width: 111px; } .g-img { width: 157px; } .g-tools { width: 73px; } .g-brush { width: 49px; }
.g-shapes { width: 258px; } .g-size { width: 57px; }
.g-colors { position: relative; width: 325px; }
.dim { color: #8c99ab; }
.ribbon i { width: 0; border: solid transparent; border-width: 3px 3px 0; border-top-color: currentColor; opacity: .8; }
.big { display: flex; flex-direction: column; align-items: center; gap: 2px; padding-top: 2px; }
.big i { margin-top: 3px; }
.g-clip .big { width: 48px; } .g-img .big { width: 68px; } .g-brush .big { width: 47px; } .g-size .big { width: 56px; }
.stack { display: flex; flex-direction: column; align-items: flex-start; gap: 6px; padding: 4px 0 0 4px; }
.g-clip .stack { padding-left: 1px; }
.stack button { display: flex; align-items: center; gap: 3px; height: 14px; }
.stack svg { fill: none; stroke: currentColor; }
.g-tools .body { flex-direction: column; gap: 6px; padding: 8px 4px 0; }
.tools { display: flex; height: 20px; border: 1px solid #b5c5da; border-radius: 2px; background: #f2f7fd; }
.tools button { flex: 1; display: grid; place-items: center; }
.tools .sel { border: 1px solid #d59b33; background: #fbc45c; font: bold 16px/16px "Liberation Serif", serif; }
.shapes { display: flex; width: 144px; height: 56px; margin: 3px 0 0 5px; border: 1px solid #b0c2da; background: #f6fafe; fill: none; stroke: #3c6797; }
.more { display: flex; flex: 1; flex-direction: column; justify-content: space-around; align-items: center; border-left: 1px solid #c9d6e6; }
.g-colors .body { gap: 8px; height: 62px; }
.col { display: flex; flex-direction: column; align-items: center; width: 22px; padding-top: 4px; text-align: center; }
.col b { flex: none; width: 22px; height: 22px; margin: 3px 0 7px; border: 1px solid #999; outline: 1px solid #fff; outline-offset: -2px; background: #000; }
.col.one { width: 39px; height: 61px; margin-left: 4px; padding: 2px 0 0; border: 1px solid #dba242; border-radius: 2px; background: linear-gradient(#fbd083, #ffcf6b); }
.col.one b { width: 29px; height: 30px; margin: 0 0 3px; background: #199c4e; }
.palette { display: grid; grid-template-columns: repeat(10, 18px); gap: 2px; padding-top: 1px; grid-auto-rows: 18px; margin-left: 1px; }
.palette s { border: 1px solid #99a5b5; box-shadow: inset 0 0 0 1px #e9eff7; }
.col.edit { width: 28px; padding-top: 1px; }
.edit b { width: 26px; height: 27px; margin: 3px 0 5px; background: linear-gradient(transparent, rgba(110, 110, 150, .7)), linear-gradient(90deg, #fb3, #f22, #3c3, #0af, #22d, #d1c, #f46); }

.work { display: grid; grid-template-columns: 1fr 16px; grid-template-rows: auto 16px; background: #f0eeee; }
.paper { position: relative; padding: 5px 5px 1px 3px; background: linear-gradient(90deg, #000 3px, #c5d1e3 3px); box-shadow: inset 0 5px #c5d1e3; }
.sketch { width: 100%; background: #fff; }
.ink { fill: none; stroke: #000; stroke-width: 4px; }
.ink .g { stroke: #239b52; }
.ink .r { stroke: #e83a2d; }
.tx { font: bold 20px Lato, "Open Sans", sans-serif; }
.gt { fill: #239b52; }
.handle { position: absolute; right: 0; top: 353px; width: 5px; height: 5px; border: 1px solid #555; background: #fff; }
.vs { display: flex; flex-direction: column; background: #f1f0f2; }
.vs div { display: grid; place-items: center; height: 326px; margin: 0 1px auto; border: 1px solid #aaa; border-radius: 2px; background: linear-gradient(90deg, #f6f6f6, #ccced2); }
.vs div svg { margin-bottom: 0; }
.hs { display: flex; align-items: center; }
.hs div { flex: 1; height: 14px; border: 1px solid #aaa; border-radius: 2px; background: linear-gradient(#f2f2f4, #c6c8cc); }
.status { display: flex; height: 23px; border-top: 1px solid #b5b5b5; background: #f1edee; color: #222; }
.status span { display: flex; align-items: center; gap: 5px; padding-left: 4px; border-right: 1px solid #ddd; }
.status svg { fill: none; stroke: #1e395b; }
.status .s1, .status .s2, .status .s3 { width: 142px; }
.status .s4 { margin-left: auto; padding: 0 3px 0 19px; border: 0; border-left: 1px solid #ddd; gap: 8px; }
.s4 button { width: 15px; height: 15px; border: 1px solid #777; border-radius: 50%; font-size: 12px; line-height: 12px; }
.s4 input { appearance: none; width: 80px; height: 14px; margin: 0; background: linear-gradient(#999, #999) 0 6px / 100% 1px no-repeat; }
.s4 input::-webkit-slider-thumb { appearance: none; width: 8px; height: 13px; border: 1px solid #666; border-radius: 1px 1px 4px 4px; background: #eee; }
.hang { position: absolute; left: 300px; bottom: 44px; display: flex; align-items: center; width: 643px; height: 35px; padding-left: 8px; background: rgba(255, 255, 255, .93); border: 1px solid #ccc; box-shadow: 0 1px 3px rgba(0, 0, 0, .4); color: #333; font-size: 10px; white-space: nowrap; }
.hang span { width: 382px; margin-left: 9px; font: 11px/16px Roboto, sans-serif; }
.hang button { width: 184px; height: 26px; border-radius: 2px; background: #5090f8; color: #fff; font-weight: bold; }
.hang a { margin-left: 9px; color: #5a86c9; }
.seven { display: flex; height: 36px; overflow: hidden; background: linear-gradient(90deg, #8ba3c3 0, #a9cdf3 8%, #b4d6f9 54%, #1e76c2 55%, #2484d4 60%, #1a60b0 75%, #123f7c 87%, #123a72); }
.seven button { width: 56px; display: grid; place-items: center; }
.seven .orb { width: 54px; }
.seven .tile { border: 1px solid #7d98b8; border-radius: 3px; background: linear-gradient(#e4effc, #c5dbf5); }
.seven .gold { width: 51px; margin-right: 5px; background: linear-gradient(90deg, #e4d9a8, #f8d672); }
.swoosh { width: 120px; margin-left: 130px; filter: blur(2px); }
.tray7 { display: flex; align-items: center; margin-left: auto; color: #fff; font-size: 10px; line-height: 16px; text-align: center; }
.pt { margin-right: 19px; font-size: 11px; }
.tray7 p { margin: 0 11px 0 17px; }
.tray7 i { width: 12px; height: 34px; border: 1px solid #6c8fb8; }
.preview { align-self: flex-end; width: 177px; margin: 5px 24px 0 0; }
.preview text { font: bold 5px "Liberation Sans", sans-serif; fill: #d8261c; }
```
